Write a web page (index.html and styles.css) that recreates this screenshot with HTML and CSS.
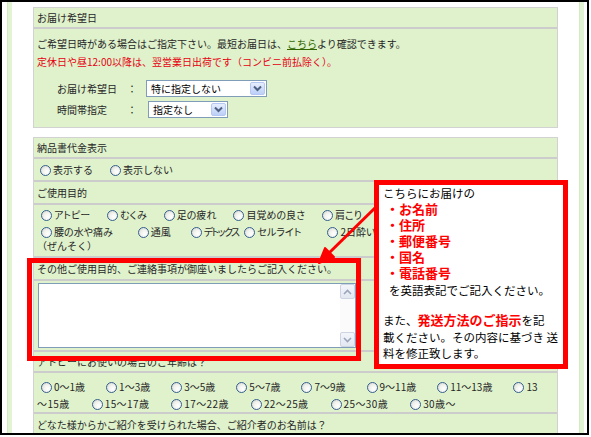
FILE: index.html
```html
<!DOCTYPE html>
<html lang="ja">
<head>
<meta charset="utf-8">
<title>お届け希望日</title>
<link rel="stylesheet" href="styles.css">
</head>
<body>
<div class="frame">
  <div class="page">
    <div class="stripe"></div>
    <div class="main">
      <section class="sec">
        <div class="hd">お届け希望日</div>
        <div class="sec-body">
          <p class="line">ご希望日時がある場合はご指定下さい。最短お届日は、<a class="link">こちら</a>より確認できます。</p>
          <p class="line red">定休日や昼12:00以降は、翌営業日出荷です（コンビニ前払除く）。</p>
          <div class="form-row">
            <span class="lbl">お届け希望日</span><span class="colon">：</span>
            <span class="select select-wide"><span class="val">特に指定しない</span><span class="btn"><svg width="9" height="7" viewBox="0 0 9 7"><path d="M1 1.5 L4.5 5 L8 1.5" fill="none" stroke="#4d6185" stroke-width="2"/></svg></span></span>
          </div>
          <div class="form-row form-row-2">
            <span class="lbl">時間帯指定</span><span class="colon">：</span>
            <span class="select select-narrow"><span class="val">指定なし</span><span class="btn"><svg width="9" height="7" viewBox="0 0 9 7"><path d="M1 1.5 L4.5 5 L8 1.5" fill="none" stroke="#4d6185" stroke-width="2"/></svg></span></span>
          </div>
        </div>
      </section>

      <section class="sec sec-2">
        <div class="hd">納品書代金表示</div>
        <div class="row row-radio">
          <span class="opt opt-wide"><i class="radio"></i>表示する</span><span class="opt opt-wide"><i class="radio"></i>表示しない</span>
        </div>
        <div class="row">ご使用目的</div>
        <div class="opts">
          <div class="opt-line l1"><span class="opt"><i class="radio"></i>アトピー</span><span class="opt"><i class="radio"></i>むくみ</span><span class="opt"><i class="radio"></i>足の疲れ</span><span class="opt"><i class="radio"></i>目覚めの良さ</span><span class="opt"><i class="radio"></i>肩こり</span></div>
          <div class="opt-line l2"><span class="opt opt-a"><i class="radio"></i>腰の水や痛み</span><span class="opt opt-b"><i class="radio"></i>通風</span><span class="opt opt-c"><i class="radio"></i>デトックス</span><span class="opt opt-d"><i class="radio"></i>セルライト</span><span class="opt"><i class="radio"></i>2日酔い</span></div>
          <div class="l3">（ぜんそく）</div>
        </div>
        <div class="row">その他ご使用目的、ご連絡事項が御座いましたらご記入ください。</div>
        <div class="ta-row">
          <div class="textarea">
            <div class="scrollbar">
              <span class="sb-btn"><svg width="9" height="6" viewBox="0 0 9 6"><path d="M1 5 L4.5 1.5 L8 5" fill="none" stroke="#9aa5bb" stroke-width="1.6"/></svg></span>
              <span class="sb-btn"><svg width="9" height="6" viewBox="0 0 9 6"><path d="M1 1 L4.5 4.5 L8 1" fill="none" stroke="#9aa5bb" stroke-width="1.6"/></svg></span>
            </div>
          </div>
        </div>
        <div class="row row-q">アトピーにお使いの場合のご年齢は？</div>
        <div class="ages">
          <div class="age-line"><span class="age"><i class="radio"></i>0～1歳</span><span class="age"><i class="radio"></i>1～3歳</span><span class="age"><i class="radio"></i>3～5歳</span><span class="age"><i class="radio"></i>5～7歳</span><span class="age"><i class="radio"></i>7～9歳</span><span class="age"><i class="radio"></i>9～11歳</span><span class="age"><i class="radio"></i>11～13歳</span><span class="age"><i class="radio"></i>13</span></div>
          <div class="age-line age-line-2"><span class="age">～15歳</span><span class="age"><i class="radio"></i>15～17歳</span><span class="age"><i class="radio"></i>17～22歳</span><span class="age"><i class="radio"></i>22～25歳</span><span class="age"><i class="radio"></i>25～30歳</span><span class="age"><i class="radio"></i>30歳～</span></div>
        </div>
        <div class="row row-last">どなた様からかご紹介を受けられた場合、ご紹介者のお名前は？</div>
      </section>
    </div>
    <div class="stripe stripe-right"></div>
  </div>

  <div class="highlight"></div>
  <svg class="arrow" width="80" height="75" viewBox="0 0 80 75">
    <line x1="78" y1="10" x2="29" y2="58" stroke="#ff0000" stroke-width="3"/>
    <polygon points="19,68 34,62 25,53" fill="#ff0000" stroke="#ff0000" stroke-width="2" stroke-linejoin="round"/>
  </svg>
  <div class="callout">
    <p class="c-line">こちらにお届けの</p>
    <ul class="fields">
      <li>お名前</li>
      <li>住所</li>
      <li>郵便番号</li>
      <li>国名</li>
      <li>電話番号</li>
    </ul>
    <p class="c-line c-indent">を英語表記でご記入ください。</p>
    <p class="c-para">また、<strong>発送方法のご指示</strong>を記<br>載ください。その内容に基づき 送<br>料を修正致します。</p>
  </div>
</div>
</body>
</html>
```

FILE: styles.css
```css
* {
  box-sizing: border-box;
  margin: 0;
  padding: 0;
}

html, body {
  background: #fff;
}

body {
  width: 591px;
  height: 437px;
  overflow: hidden;
  font-family: "Noto Sans CJK JP", "Noto Sans", sans-serif;
  font-size: 10px;
  color: #262626;
}

.frame {
  position: relative;
  width: 589px;
  height: 435px;
  border: 2px solid #000;
  overflow: hidden;
  background: #fff;
}

.page {
  display: flex;
  height: 100%;
  padding-left: 5px;
}

.stripe {
  width: 5px;
  flex: none;
  background: #e3f4d4;
  border-left: 1px solid #d3ebc0;
}

.main {
  width: 525px;
  flex: none;
  margin: 0 21px;
  padding-top: 5px;
}

.sec {
  background: #dff2cc;
  border: 1px solid #d2d2d2;
}

.sec-2 {
  margin-top: 9px;
}

.hd {
  height: 21px;
  line-height: 19px;
  padding-left: 3px;
  border-bottom: 2px solid #cccccc;
}

.sec-body {
  height: 98px;
  padding: 6px 0 0 3px;
}

.line {
  line-height: 18px;
  white-space: nowrap;
}

.red {
  color: #e60012;
}

.link {
  color: #336600;
  text-decoration: underline;
}

.form-row {
  display: flex;
  align-items: center;
  height: 17px;
  margin-top: 9px;
  padding-left: 20px;
}

.form-row-2 {
  margin-top: 4px;
}

.lbl {
  width: 70px;
}

.colon {
  width: 10px;
  text-align: center;
}

.select {
  display: flex;
  align-items: center;
  height: 17px;
  margin-left: 9px;
  padding: 0 1px 0 4px;
  background: #fff;
  border: 1px solid #7f9db9;
  color: #000;
}

.form-row-2 .select {
  margin-left: 11px;
}

.select-wide {
  width: 121px;
}

.select-narrow {
  width: 80px;
}

.val {
  flex: 1;
  line-height: 15px;
}

.btn {
  display: flex;
  align-items: center;
  justify-content: center;
  width: 15px;
  height: 13px;
  background: linear-gradient(#e6eefe, #bccff7);
  border: 1px solid #b4c8f3;
  border-radius: 2px;
}

.row {
  height: 23px;
  line-height: 21px;
  padding-left: 3px;
  border-bottom: 2px solid #cccccc;
  white-space: nowrap;
  overflow: hidden;
}

.row-radio {
  padding-left: 2px;
}

.row-q {
  height: 21px;
  line-height: 19px;
}

.row-last {
  height: 24px;
  line-height: 22px;
  border-bottom: none;
}

.radio {
  display: inline-block;
  width: 11px;
  height: 11px;
  margin: 0 2px 0 4px;
  vertical-align: -2px;
  border: 1px solid #35608f;
  border-radius: 50%;
  background: radial-gradient(circle at 65% 65%, #ffffff 0%, #f2f2ee 45%, #d2d2ca 100%);
}

.opt {
  margin-right: 11px;
}

.opts .opt {
  font-feature-settings: "palt";
  margin-right: 13px;
}

.opts .opt-a {
  margin-right: 21px;
}

.opts .opt-b {
  margin-right: 16px;
}

.opts .opt-c {
  letter-spacing: -1.6px;
  margin-right: 2px;
}

.opts .opt-d {
  margin-right: 22px;
}

.opt-wide {
  margin-right: 13px;
}

.opts {
  height: 53px;
  padding-left: 3px;
  border-bottom: 2px solid #cccccc;
}

.opt-line {
  white-space: nowrap;
  overflow: hidden;
}

.l1 {
  line-height: 19px;
}

.l2 {
  line-height: 16px;
}

.l3 {
  line-height: 12px;
  white-space: nowrap;
}

.ta-row {
  height: 71px;
  padding: 2px 0 0 4px;
  border-bottom: 2px solid #cccccc;
}

.textarea {
  display: flex;
  justify-content: flex-end;
  width: 318px;
  height: 65px;
  background: #fff;
  border: 1px solid #7f9db9;
}

.scrollbar {
  display: flex;
  flex-direction: column;
  justify-content: space-between;
  width: 15px;
  background: #fbfbfb;
}

.sb-btn {
  display: flex;
  align-items: center;
  justify-content: center;
  height: 15px;
  background: linear-gradient(#f3f5fa, #e2e7f1);
  border: 1px solid #cdd5e4;
  border-radius: 2px;
}

.ages {
  height: 41px;
  padding: 5px 0 0 3px;
  border-bottom: 2px solid #cccccc;
}

.age-line {
  line-height: 17px;
  white-space: nowrap;
  overflow: hidden;
}

.age {
  margin-right: 17px;
}

.age-line-2 .age {
  margin-right: 18px;
  letter-spacing: 0.4px;
}

.highlight {
  position: absolute;
  left: 25px;
  top: 256px;
  width: 334px;
  height: 103px;
  border: 5px solid #ff0000;
}

.arrow {
  position: absolute;
  left: 298px;
  top: 193px;
}

.callout {
  position: absolute;
  left: 372px;
  top: 178px;
  width: 194px;
  height: 189px;
  padding: 0 0 0 4px;
  background: #fff;
  border: 5px solid #ff0000;
  color: #000;
  font-size: 11.5px;
  white-space: nowrap;
}

.c-line {
  line-height: 16px;
}

.c-indent {
  padding-left: 6px;
  margin-top: 1px;
}

.fields {
  list-style: none;
}

.fields li {
  line-height: 16px;
  padding-left: 3px;
  color: #ff0000;
  font-weight: bold;
  font-size: 13px;
}

.fields li::before {
  content: "・";
}

.c-para {
  margin-top: 14px;
  line-height: 16.5px;
}

.c-para strong {
  color: #ff0000;
  font-size: 13px;
}
```
